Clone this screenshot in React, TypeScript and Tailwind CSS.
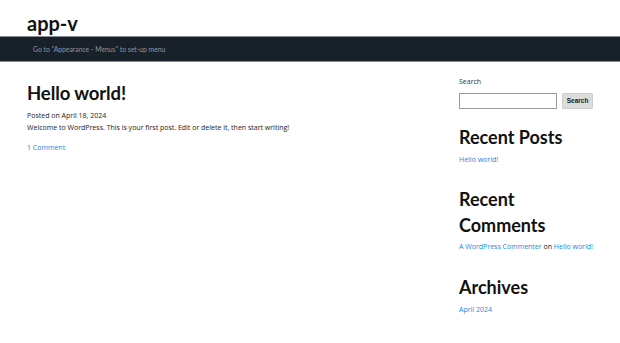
export default function App() {
  const heading = "font-['Lato',sans-serif] font-bold text-[#111]";
  const small = "font-['Open_Sans',sans-serif] text-[7px] leading-[12px]";
  return (
    <div className="min-h-screen bg-white font-['Lato',sans-serif]">
      <header className="px-[27px] pt-[13px] pb-[2px]">
        <div className={`${heading} text-[20px] leading-[21px]`}>app-v</div>
      </header>
      <nav className="border-y border-[#8a8e93] bg-[#18202a]">
        <div className="flex h-[24px] items-center px-[33px] text-[6.8px] text-[#8c97a3]">
          Go to "Appearance - Menus" to set-up menu
        </div>
      </nav>
      <main className="flex justify-between pl-[27px] pr-[27px]">
        <article className="pt-[18px]">
          <h1 className={`${heading} text-[18.5px] leading-[26px] tracking-[-0.1px]`}>
            Hello world!
          </h1>
          <div className={`${small} mt-[4px] text-[#222]`}>Posted on April 18, 2024</div>
          <p className={`${small} text-[#222]`}>
            Welcome to WordPress. This is your first post. Edit or delete it, then start writing!
          </p>
          <a href="#" className={`${small} mt-[8px] block text-[#1e88e5]`}>
            1 Comment
          </a>
        </article>
        <aside className="w-[134px] pt-[14px]">
          <div className={`${small} text-[#333]`}>Search</div>
          <div className="mt-[5px] flex gap-[5px]">
            <div className="h-[16px] w-[99px] border border-[#999] bg-white" />
            <button className="h-[16px] w-[31px] rounded-[1px] border border-[#ccc] bg-[#dcdcdc] font-['Liberation_Sans',sans-serif] text-[6.5px] font-bold text-[#222]">
              Search
            </button>
          </div>
          <h2 className={`${heading} mt-[15px] text-[18px] leading-[26px]`}>Recent Posts</h2>
          <a href="#" className={`${small} mt-[4px] block text-[#1e88e5]`}>
            Hello world!
          </a>
          <h2 className={`${heading} mt-[20px] text-[18px] leading-[26px]`}>
            Recent
            <br />
            Comments
          </h2>
          <div className={`${small} mt-[3px] whitespace-nowrap text-[#222]`}>
            <a href="#" className="text-[#1e88e5]">A WordPress Commenter</a> on{" "}
            <a href="#" className="text-[#1e88e5]">Hello world!</a>
          </div>
          <h2 className={`${heading} mt-[21px] text-[18px] leading-[26px]`}>Archives</h2>
          <a href="#" className={`${small} mt-[4px] block text-[#1e88e5]`}>
            April 2024
          </a>
        </aside>
      </main>
    </div>
  );
}
